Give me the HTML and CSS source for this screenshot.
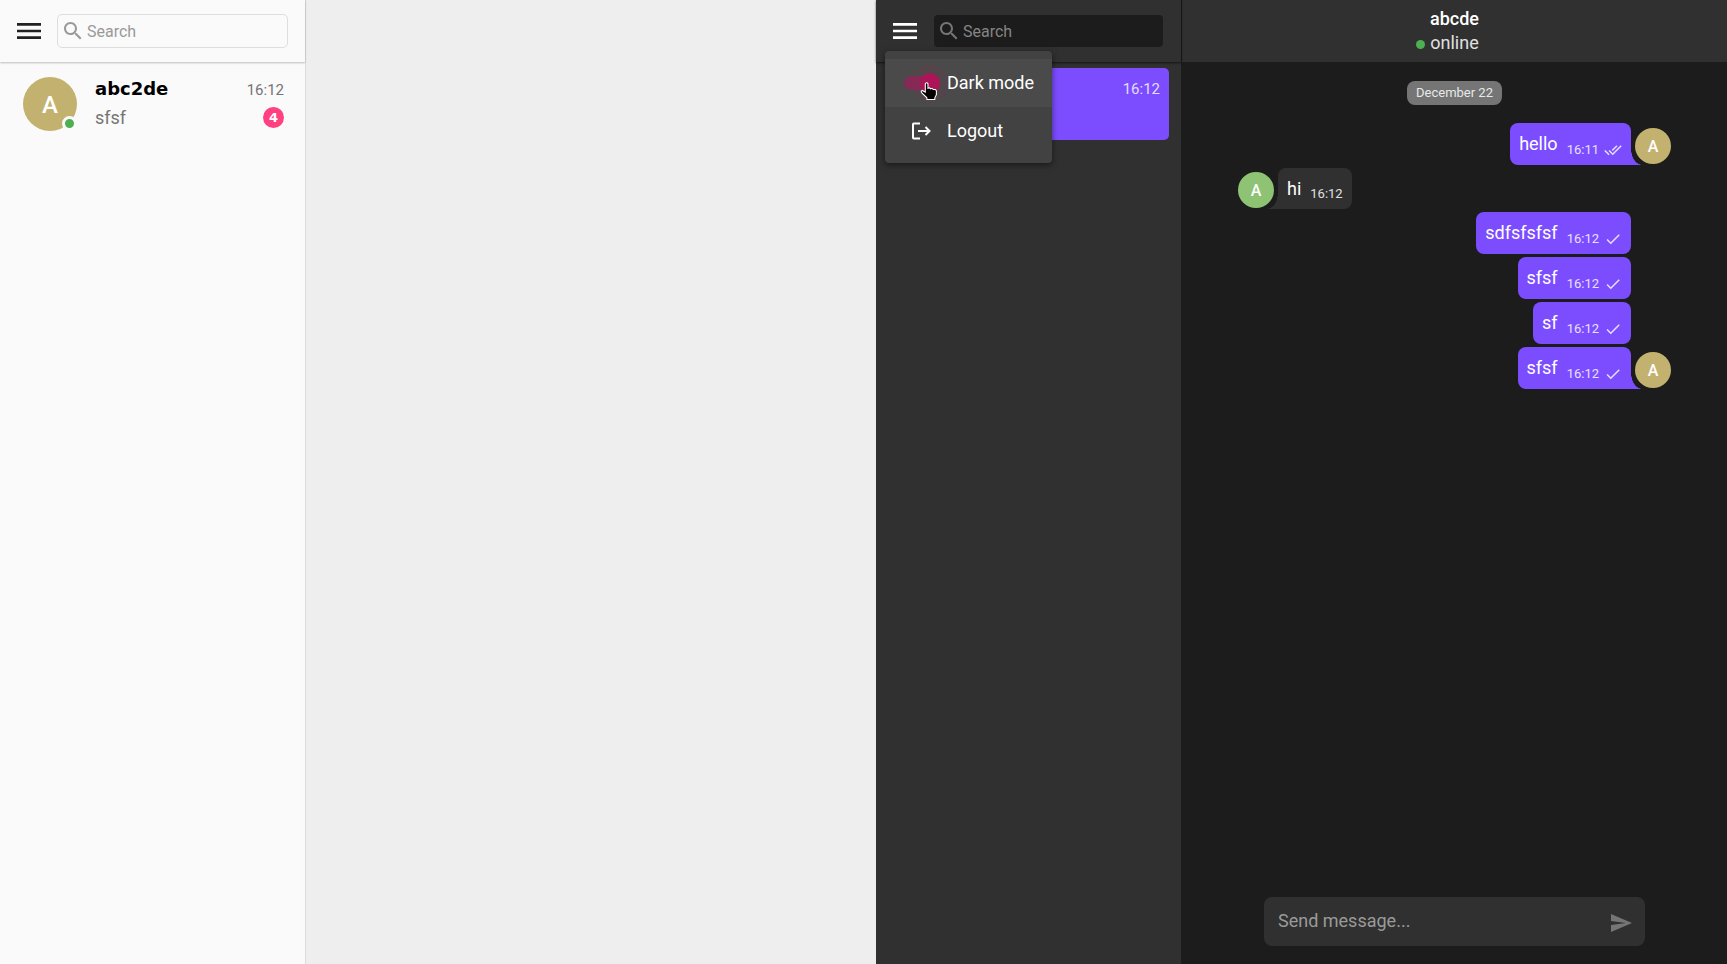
FILE: index.html
```
<!DOCTYPE html>
<html lang="en">
<head>
<meta charset="utf-8">
<title>Messenger</title>
<link rel="stylesheet" href="styles.css">
</head>
<body>
<div class="screen">
  <section class="app app-light">
    <aside class="sidebar">
      <header class="bar">
        <button class="icon-button" aria-label="Menu"><svg class="icon-menu" viewBox="0 0 24 24"><path d="M3 18h18v-2H3v2zm0-5h18v-2H3v2zm0-7v2h18V6H3z"/></svg></button>
        <label class="search">
          <svg class="icon" viewBox="0 0 24 24"><path d="M15.5 14h-.79l-.28-.27C15.41 12.59 16 11.11 16 9.5 16 5.91 13.09 3 9.5 3S3 5.91 3 9.5 5.91 16 9.5 16c1.61 0 3.09-.59 4.23-1.57l.27.28v.79l5 4.99L20.49 19l-4.99-5zm-6 0C7.01 14 5 11.99 5 9.5S7.01 5 9.5 5 14 7.01 14 9.5 11.99 14 9.5 14z"/></svg>
          <input class="search-input" type="text" placeholder="Search" aria-label="Search">
        </label>
      </header>
      <a class="dialog" href="#">
        <span class="avatar avatar-large">A<span class="presence"></span></span>
        <span class="dialog-body">
          <span class="dialog-row"><strong class="dialog-name">abc2de</strong><time class="dialog-time">16:12</time></span>
          <span class="dialog-row"><span class="dialog-text">sfsf</span><span class="badge">4</span></span>
        </span>
      </a>
    </aside>
    <main class="empty"></main>
  </section>

  <section class="app app-dark">
    <aside class="sidebar">
      <header class="bar">
        <button class="icon-button" aria-label="Menu"><svg class="icon-menu" viewBox="0 0 24 24"><path d="M3 18h18v-2H3v2zm0-5h18v-2H3v2zm0-7v2h18V6H3z"/></svg></button>
        <label class="search">
          <svg class="icon" viewBox="0 0 24 24"><path d="M15.5 14h-.79l-.28-.27C15.41 12.59 16 11.11 16 9.5 16 5.91 13.09 3 9.5 3S3 5.91 3 9.5 5.91 16 9.5 16c1.61 0 3.09-.59 4.23-1.57l.27.28v.79l5 4.99L20.49 19l-4.99-5zm-6 0C7.01 14 5 11.99 5 9.5S7.01 5 9.5 5 14 7.01 14 9.5 11.99 14 9.5 14z"/></svg>
          <input class="search-input" type="text" placeholder="Search" aria-label="Search">
        </label>
      </header>
      <a class="dialog dialog-active" href="#">
        <span class="dialog-body">
          <span class="dialog-row dialog-row-end"><time class="dialog-time">16:12</time></span>
        </span>
      </a>
      <div class="menu">
        <label class="menu-item menu-item-hover">
          <span class="menu-icon"><input class="switch" type="checkbox" checked></span>
          Dark mode
        </label>
        <button class="menu-item">
          <span class="menu-icon"><svg class="icon-logout" viewBox="0 0 24 24"><path d="M11 4.500H4.700Q4 4.500 4 5.200V18.800Q4 19.500 4.700 19.500H11M9 12H20.500M16.500 8l4 4-4 4"/></svg></span>
          Logout
        </button>
        <svg class="pointer" viewBox="0 0 17 18"><path d="M5 1.500Q6.500 0 7.500 1.500V6Q9 5 10 6.500Q11.500 5.500 12.500 7.200Q15 6.500 15.500 8.500V12L14 15V16.500H6.500V15L1.500 10Q.5 8.500 2 8L5 9.500z"/></svg>
      </div>
    </aside>
    <main class="chat">
      <header class="chat-head">
        <strong class="chat-name">abcde</strong>
        <span class="chat-status">online</span>
      </header>
      <div class="messages">
        <div class="date">December 22</div>
        <div class="msg msg-out"><div class="bubble bubble-tail">hello<time class="msg-time">16:11</time><svg class="tick" viewBox="0 0 24 24"><path d="M18 7l-1.410-1.410-6.340 6.340 1.410 1.410L18 7zm4.240-1.410L11.660 16.170 7.480 12l-1.410 1.410L11.660 19l12-12-1.420-1.410zM.41 13.410L6 19l1.410-1.410L1.830 12 .41 13.410z"/></svg></div><span class="avatar">A</span></div>
        <div class="msg msg-in"><span class="avatar avatar-green">A</span><div class="bubble bubble-tail">hi<time class="msg-time">16:12</time></div></div>
        <div class="msg msg-out"><div class="bubble">sdfsfsfsf<time class="msg-time">16:12</time><svg class="tick" viewBox="0 0 24 24"><path d="M9 16.200L4.800 12l-1.400 1.400L9 19 21 7l-1.400-1.400L9 16.200z"/></svg></div></div>
        <div class="msg msg-out"><div class="bubble">sfsf<time class="msg-time">16:12</time><svg class="tick" viewBox="0 0 24 24"><path d="M9 16.200L4.800 12l-1.400 1.400L9 19 21 7l-1.400-1.400L9 16.200z"/></svg></div></div>
        <div class="msg msg-out"><div class="bubble">sf<time class="msg-time">16:12</time><svg class="tick" viewBox="0 0 24 24"><path d="M9 16.200L4.800 12l-1.400 1.400L9 19 21 7l-1.400-1.400L9 16.200z"/></svg></div></div>
        <div class="msg msg-out"><div class="bubble bubble-tail">sfsf<time class="msg-time">16:12</time><svg class="tick" viewBox="0 0 24 24"><path d="M9 16.200L4.800 12l-1.400 1.400L9 19 21 7l-1.400-1.400L9 16.200z"/></svg></div><span class="avatar">A</span></div>
      </div>
      <form class="composer">
        <input class="composer-input" type="text" placeholder="Send message..." aria-label="Send message">
        <button class="icon-button send" type="button" aria-label="Send"><svg class="icon" viewBox="0 0 24 24"><path d="M2.010 21L23 12 2.010 3 2 10l15 2-15 2z"/></svg></button>
      </form>
    </main>
  </section>
</div>
</body>
</html>
```
FILE: styles.css
```
* { box-sizing: border-box; }
body { margin: 0; font-family: Roboto, "Liberation Sans", sans-serif; font-size: 18px; line-height: 24px; }
button, input { font: inherit; color: inherit; border: 0; padding: 0; background: none; outline: 0; }
a { color: inherit; text-decoration: none; }

.screen { display: flex; min-height: 100vh; }
.app { display: flex; min-width: 0; }
.app-light { flex: 876; background: #eee; color: #000; }
.app-dark { flex: 851; background: #1c1c1c; color: #fff; }

.sidebar { position: relative; flex: 0 0 306px; min-width: 0; background: #fafafa; border-right: 1px solid #dcdcdc; }
.app-dark .sidebar { background: #303030; border-color: #1c1c1c; }
.empty { flex: 1; }

.bar { display: flex; align-items: center; gap: 12px; height: 62px; padding: 0 17px 0 13px; box-shadow: 0 1px 2px rgba(0, 0, 0, .25); }
.app-dark .bar { box-shadow: 0 1px 2px rgba(0, 0, 0, .6); }
.icon-button { display: flex; cursor: pointer; }
.icon { width: 24px; height: 24px; flex: none; fill: currentColor; }
.icon-menu { width: 32px; height: 32px; fill: #212121; }
.app-dark .icon-menu { fill: #fff; }

.search { display: flex; align-items: center; gap: 2px; flex: 1; min-width: 0; height: 34px; padding: 0 3px; border: 1px solid #dedede; border-radius: 5px; color: #999; }
.app-dark .search { background: #1c1c1c; background-clip: padding-box; border-color: transparent; color: #757575; }
.search-input { flex: 1; min-width: 0; width: 100%; padding-top: 2px; font-size: 16px; }
.search-input::placeholder { color: #999; opacity: 1; }
.app-dark .search-input::placeholder { color: #858585; }

.dialog { display: flex; align-items: center; gap: 18px; height: 72px; margin: 6px 12px; padding: 0 9px 0 11px; border-radius: 5px; }
.dialog-active { background: #7c4dff; }
.dialog-body { display: flex; flex-direction: column; gap: 4px; flex: 1; }
.dialog-row { display: flex; align-items: center; justify-content: space-between; height: 24px; }
.dialog-row-end { justify-content: flex-end; }
.dialog-active .dialog-body { align-self: flex-start; padding-top: 9px; }
.dialog-name { padding-bottom: 2px; font: bold 18px/24px "DejaVu Sans", sans-serif; }
.dialog-time { padding-bottom: 1px; font-size: 15px; color: #757575; }
.dialog-active .dialog-time { color: #e5dbff; }
.dialog-text { color: #757575; }
.badge { width: 21px; height: 21px; margin-bottom: 1px; border-radius: 50%; background: #ff4081; color: #fff; font: bold 13px/21px "DejaVu Sans", sans-serif; text-align: center; }

.avatar { position: relative; flex: none; width: 36px; height: 36px; border-radius: 50%; background: #c3b26f; color: #fff; font-size: 16px; font-weight: 500; line-height: 38px; text-align: center; }
.avatar-green { background: #8dc373; }
.avatar-large { width: 54px; height: 54px; font-size: 24px; line-height: 56px; }
.presence { position: absolute; right: 0; bottom: 0; width: 15px; height: 15px; border: 3px solid #fafafa; border-radius: 50%; background: #4caf50; }

.menu { position: absolute; left: 9px; top: 51px; width: 167px; padding: 8px 0; border-radius: 4px; background: #424242; box-shadow: 0 2px 6px rgba(0, 0, 0, .5); }
.menu-item { display: flex; align-items: center; gap: 7px; width: 100%; height: 48px; padding-left: 17px; text-align: left; cursor: pointer; }
.menu-item-hover { background: #4a4a4a; }
.menu-icon { display: flex; justify-content: center; width: 38px; }
.icon-logout { width: 24px; height: 24px; fill: none; stroke: #fff; stroke-width: 2; }
.switch { appearance: none; position: relative; width: 34px; height: 14px; margin: 0; border-radius: 7px; background: #832b55; }
.switch::after { content: ""; position: absolute; right: -2px; top: -3px; width: 20px; height: 20px; border-radius: 50%; background: #ad1457; box-shadow: 0 0 0 9px rgba(173, 20, 87, .08); }
.pointer { position: absolute; left: 35px; top: 31px; width: 18px; height: 19px; fill: #000; stroke: #fff; stroke-width: 1; }

.chat { display: flex; flex-direction: column; flex: 1; min-width: 0; }
.chat-head { display: flex; flex-direction: column; align-items: center; height: 62px; padding-top: 7px; background: #303030; }
.chat-name { font-weight: 500; }
.chat-status { position: relative; color: #e0e0e0; }
.chat-status::before { content: ""; position: absolute; left: -14px; top: 9px; width: 9px; height: 9px; border-radius: 50%; background: #4caf50; }

.messages { display: flex; flex-direction: column; gap: 3px; flex: 1; padding: 19px 56px; }
.date { align-self: center; margin-bottom: 15px; padding: 0 9px; border-radius: 8px; background: #757575; color: #e8e8e8; font-size: 13px; line-height: 24px; }
.msg { display: flex; align-items: flex-end; gap: 4px; }
.msg-out { justify-content: flex-end; padding-right: 40px; }
.msg-out:has(.avatar) { padding-right: 0; }
.msg .avatar { margin-bottom: 1px; }
.bubble { position: relative; display: flex; align-items: center; height: 42px; padding: 0 9px; border-radius: 8px; background: #7c4dff; }
.msg-in .bubble { height: 41px; background: #303030; }
.msg-time { margin: 12px 0 0 9px; font-size: 13px; line-height: 16px; color: #e8e0ff; }
.msg-in .msg-time { margin-top: 10px; color: #e0e0e0; }
.tick { width: 18px; height: 18px; margin: 12px 0 0 5px; fill: #e8e0ff; }
.msg-out .bubble-tail { border-bottom-right-radius: 0; }
.msg-in .bubble-tail { border-bottom-left-radius: 0; }
.bubble-tail::after { content: ""; position: absolute; bottom: 0; width: 11px; height: 16px; }
.msg-out .bubble-tail::after { left: 100%; background: radial-gradient(ellipse 11px 16px at 100% 0, transparent 97%, #7c4dff 100%); }
.msg-in .bubble-tail::after { right: 100%; background: radial-gradient(ellipse 11px 16px at 0 0, transparent 97%, #303030 100%); }

.composer { display: flex; align-items: center; height: 49px; margin: 0 82px 18px; padding: 0 12px 0 14px; border-radius: 8px; background: #303030; }
.composer-input { flex: 1; min-width: 0; padding-bottom: 2px; }
.composer-input::placeholder { color: #9a9a9a; opacity: 1; }
.send { margin-top: 3px; color: #757575; }
```
